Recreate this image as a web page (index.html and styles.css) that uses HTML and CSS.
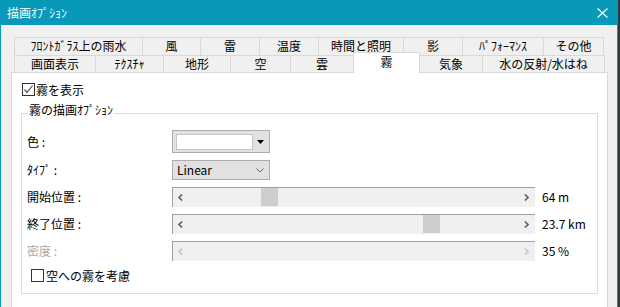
FILE: index.html
```html
<!DOCTYPE html>
<html>
<head>
  <meta charset="UTF-8">
  <title>描画ｵﾌﾟｼｮﾝ</title>
  <link rel="stylesheet" href="styles.css">
</head>
<body>
  <div class="window">
    <div class="titlebar">
      <span class="title">描画ｵﾌﾟｼｮﾝ</span>
      <svg class="close" width="11" height="10" viewBox="0 0 11 10">
        <path d="M0.5 0.5 L10.5 9.5 M10.5 0.5 L0.5 9.5" stroke="#fff" stroke-width="1.1" fill="none"/>
      </svg>
    </div>

    <div class="dialog">
      <div class="tabs">
        <div class="tab-row back">
          <div class="tab w128">ﾌﾛﾝﾄｶﾞﾗｽ上の雨水</div>
          <div class="tab w58">風</div>
          <div class="tab w59">雷</div>
          <div class="tab w59">温度</div>
          <div class="tab w85">時間と照明</div>
          <div class="tab w59">影</div>
          <div class="tab w81">ﾊﾟﾌｫｰﾏﾝｽ</div>
          <div class="tab w61">その他</div>
        </div>
        <div class="tab-row front">
          <div class="tab w81">画面表示</div>
          <div class="tab w68">ﾃｸｽﾁｬ</div>
          <div class="tab w67">地形</div>
          <div class="tab w60">空</div>
          <div class="tab w63">雲</div>
          <div class="tab w67 active">霧</div>
          <div class="tab w62">気象</div>
          <div class="tab w123">水の反射/水はね</div>
        </div>
      </div>

      <div class="panel">
        <label class="check">
          <span class="box">
            <svg width="11" height="11" viewBox="0 0 11 11">
              <polyline points="1.5,5.5 4,8.5 9.5,1.5" stroke="#555" stroke-width="1.2" fill="none"/>
            </svg>
          </span>
          <span>霧を表示</span>
        </label>

        <div class="group">
          <span class="legend">霧の描画ｵﾌﾟｼｮﾝ</span>

          <div class="form">
            <span class="label">色 :</span>
            <div class="combo">
              <span class="swatch"></span>
              <svg width="7" height="4" viewBox="0 0 7 4"><polygon points="0,0 7,0 3.5,4" fill="#000"/></svg>
            </div>
            <span></span>

            <span class="label">ﾀｲﾌﾟ :</span>
            <div class="combo select">
              <span>Linear</span>
              <svg width="8" height="5" viewBox="0 0 8 5"><polyline points="0.5,0.5 4,4 7.5,0.5" stroke="#666" stroke-width="1" fill="none"/></svg>
            </div>
            <span></span>

            <span class="label">開始位置 :</span>
            <div class="track">
              <svg class="arrow" width="5" height="7" viewBox="0 0 5 7"><polyline points="4.2,0.5 1,3.5 4.2,6.5" /></svg>
              <svg class="arrow" width="5" height="7" viewBox="0 0 5 7"><polyline points="0.8,0.5 4,3.5 0.8,6.5" /></svg>
              <span class="thumb" style="left: 88px"></span>
            </div>
            <span class="value">64 m</span>

            <span class="label">終了位置 :</span>
            <div class="track">
              <svg class="arrow" width="5" height="7" viewBox="0 0 5 7"><polyline points="4.2,0.5 1,3.5 4.2,6.5" /></svg>
              <svg class="arrow" width="5" height="7" viewBox="0 0 5 7"><polyline points="0.8,0.5 4,3.5 0.8,6.5" /></svg>
              <span class="thumb" style="left: 250px"></span>
            </div>
            <span class="value">23.7 km</span>

            <span class="label disabled">密度 :</span>
            <div class="track off">
              <svg class="arrow" width="5" height="7" viewBox="0 0 5 7"><polyline points="4.2,0.5 1,3.5 4.2,6.5" /></svg>
              <svg class="arrow" width="5" height="7" viewBox="0 0 5 7"><polyline points="0.8,0.5 4,3.5 0.8,6.5" /></svg>
            </div>
            <span class="value">35 %</span>

            <label class="check sky">
              <span class="box"></span>
              <span>空への霧を考慮</span>
            </label>
          </div>
        </div>
      </div>
    </div>
  </div>
</body>
</html>
```

FILE: styles.css
```css
body {
  margin: 0;
  background-color: #2f3c3b;
  font-family: "Noto Sans CJK JP", "Noto Sans", sans-serif;
  font-size: 12px;
  color: #000;
}
.window {
  width: 618px;
  height: 307px;
  box-sizing: border-box;
  border-left: 1px solid #0899b9;
  border-right: 1px solid #0899b9;
  background-color: #f0f0f0;
  overflow: hidden;
}
.titlebar {
  height: 25px;
  background-color: #0899b9;
  color: #fff;
  display: flex;
  align-items: center;
  justify-content: space-between;
  padding: 0 9px 0 6px;
}
.title {
  line-height: 14px;
  margin-top: 1px;
}
.dialog {
  padding: 12px 9px 0 10px;
}
.tabs {
  margin-left: 3px;
}
.tab-row {
  display: flex;
}
.tab-row.back {
  height: 18px;
}
.tab-row.front {
  height: 17px;
  align-items: flex-start;
}
.tab {
  box-sizing: border-box;
  height: 100%;
  border-left: 1px solid #d9d9d9;
  border-top: 1px solid #d9d9d9;
  background-color: #f0f0f0;
  display: flex;
  align-items: center;
  justify-content: center;
  line-height: 14px;
  white-space: nowrap;
}
.tab-row.back .tab {
  padding-bottom: 2px;
}
.tab:last-child {
  border-right: 1px solid #d9d9d9;
}
.tab.active {
  position: relative;
  z-index: 1;
  height: 21px;
  margin-top: -3px;
  background-color: #fff;
  border-right: 1px solid #d9d9d9;
  align-items: flex-start;
  padding-top: 2px;
  line-height: 13px;
}
.tab.active + .tab {
  border-left: none;
}
.w58 { width: 58px; }
.w59 { width: 59px; }
.w60 { width: 60px; }
.w61 { width: 61px; }
.w62 { width: 62px; }
.w63 { width: 63px; }
.w67 { width: 67px; }
.w68 { width: 68px; }
.w81 { width: 81px; }
.w85 { width: 85px; }
.w123 { width: 123px; }
.w128 { width: 128px; }

.panel {
  width: 597px;
  height: 300px;
  box-sizing: border-box;
  border: 1px solid #d9d9d9;
  background-color: #fff;
  padding: 10px 9px 0 9px;
}
.check {
  display: flex;
  align-items: center;
  gap: 1px;
  height: 13px;
  line-height: 14px;
  margin-left: 1px;
}
.box {
  width: 13px;
  height: 13px;
  box-sizing: border-box;
  border: 1px solid #333;
  background-color: #fff;
  display: flex;
}
.group {
  position: relative;
  margin-top: 17px;
  border: 1px solid #dcdcdc;
  padding: 16px 0 10px 5px;
}
.legend {
  position: absolute;
  top: -11px;
  left: 6px;
  padding: 0 1px;
  background-color: #fff;
  line-height: 14px;
}
.form {
  display: grid;
  grid-template-columns: 145px 363px auto;
  row-gap: 7px;
  align-items: center;
}
.label {
  line-height: 14px;
}
.label.disabled {
  color: #a6a6a6;
}
.combo {
  width: 98px;
  height: 23px;
  box-sizing: border-box;
  border: 1px solid #adadad;
  background-color: #e1e1e1;
  display: flex;
  align-items: center;
  gap: 4px;
  padding: 0 3px;
}
.swatch {
  width: 77px;
  height: 16px;
  box-sizing: border-box;
  border: 1px solid #c4c4c4;
  background-color: #fff;
}
.combo.select {
  height: 20px;
  justify-content: space-between;
  padding: 0 5px 0 4px;
  line-height: 14px;
}
.track {
  position: relative;
  height: 20px;
  box-sizing: border-box;
  border-top: 1px solid #a0a0a0;
  border-left: 1px solid #a0a0a0;
  background-color: #f0f0f0;
  display: flex;
  align-items: center;
  justify-content: space-between;
  padding: 0 6px 0 5px;
}
.arrow polyline {
  stroke: #606060;
  stroke-width: 1.6;
  fill: none;
}
.track.off .arrow polyline {
  stroke: #c4c4c4;
}
.thumb {
  position: absolute;
  top: 0;
  width: 17px;
  height: 18px;
  background-color: #cdcdcd;
}
.value {
  padding-left: 7px;
  line-height: 14px;
  white-space: nowrap;
}
.check.sky {
  grid-column: 1 / -1;
  height: 15px;
  margin-left: 4px;
  gap: 2px;
}
```
